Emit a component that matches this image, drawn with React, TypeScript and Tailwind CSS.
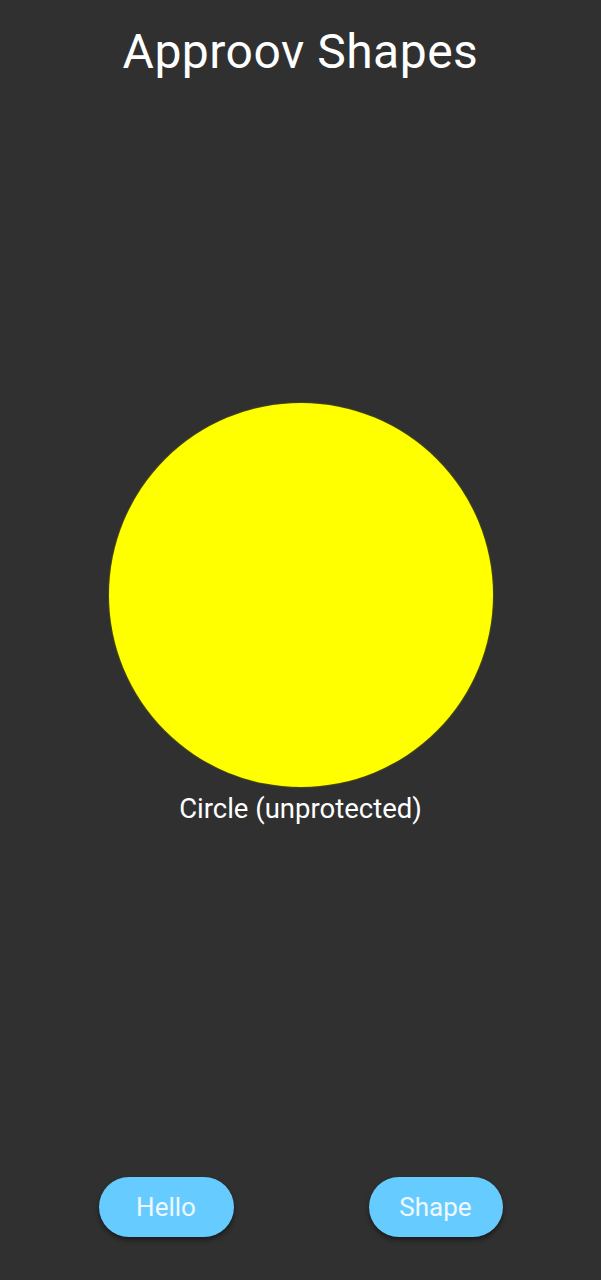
const App = () => {
  return (
    <div
      className="flex h-[1280px] w-full flex-col items-center bg-[#303030] text-white"
      style={{ fontFamily: "Roboto, 'Noto Sans', sans-serif" }}
    >
      {/* Title */}
      <h1 className="mt-[28px] text-[48px] leading-[48px] font-normal tracking-[0.5px]">Approov Shapes</h1>

      {/* Shape */}
      <div className="mt-[327px] h-[384px] w-[384px] rounded-full bg-[#ffff00] shadow-[0_0_1px_1px_rgba(90,90,0,0.6)]" />
      <p className="mt-[8px] text-[27.5px] leading-[27px]">Circle (unprotected)</p>

      {/* Buttons */}
      <div className="mt-auto mb-[43px] flex gap-[135px]">
        <button className="h-[60px] w-[135px] rounded-full bg-[#66ccff] text-[26px] text-[#f0f8ff] shadow-[0_3px_5px_rgba(0,0,0,0.45)]">
          Hello
        </button>
        <button className="h-[60px] w-[134px] rounded-full bg-[#66ccff] text-[26px] text-[#f0f8ff] shadow-[0_3px_5px_rgba(0,0,0,0.45)]">
          Shape
        </button>
      </div>
    </div>
  );
};

export default App;
